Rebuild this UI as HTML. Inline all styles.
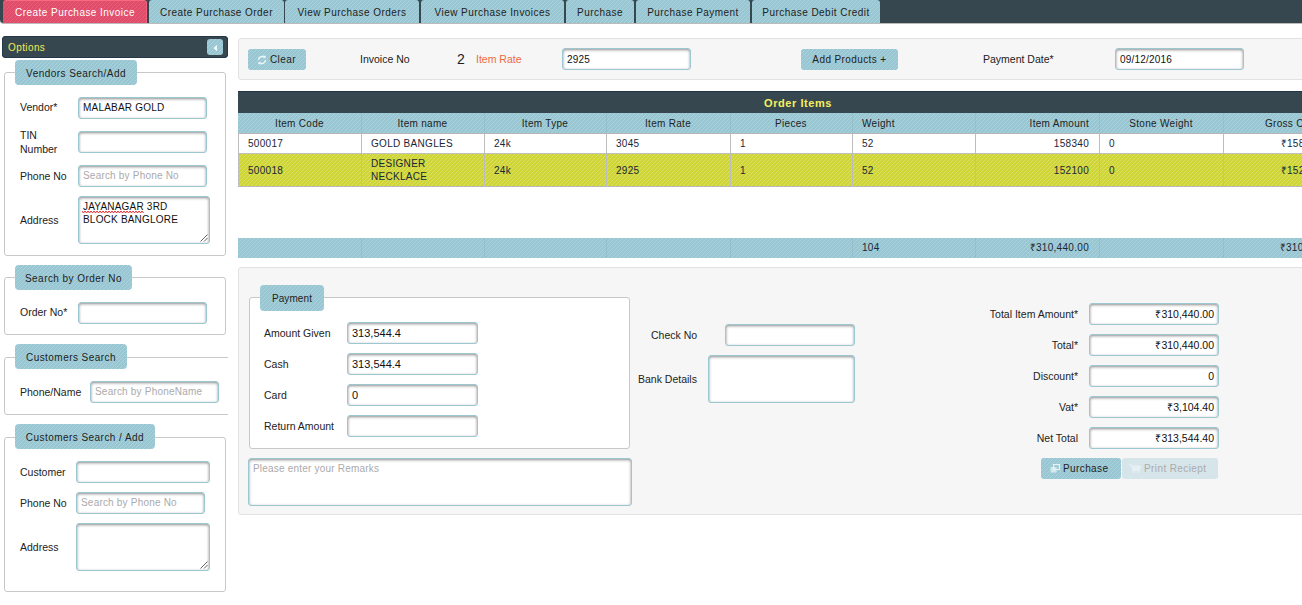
<!DOCTYPE html>
<html><head><meta charset="utf-8">
<style>
*{box-sizing:border-box;margin:0;padding:0}
html,body{width:1302px;height:605px;overflow:hidden;background:#fff;font-family:"Liberation Sans",sans-serif;color:#222;font-size:11px}
.a{position:absolute}
.stripe{background-color:#98c7d3;background-image:linear-gradient(135deg,rgba(255,255,255,.19) 16%,transparent 16%,transparent 50%,rgba(255,255,255,.19) 50%,rgba(255,255,255,.19) 66%,transparent 66%,transparent);background-size:4px 4px}
.nav{left:0;top:0;width:1320px;height:24px;background:#37474f;border-radius:0 0 4px 4px;border-bottom:1px solid #bbb}
.tab{top:0;height:23px;line-height:25px;font-size:10px;letter-spacing:.45px;color:#222;text-align:center;border-radius:3px 3px 0 0}
.tab.red{box-shadow:inset 0 1px 0 #f86a7f,inset -1px 0 0 #f0607a;background-color:#e04c69;background-image:linear-gradient(135deg,rgba(255,255,255,.1) 20%,transparent 20%,transparent 50%,rgba(255,255,255,.1) 50%,rgba(255,255,255,.1) 70%,transparent 70%,transparent);background-size:4px 4px;color:#fff}
.opts{left:2px;top:36px;width:226px;height:22px;background:#37474f;border-radius:4px;box-shadow:inset 0 0 0 1px #24384a;color:#f0ec5a;font-size:10px;letter-spacing:.4px;line-height:24px;padding-left:6px}
.collapse{left:207px;top:39px;width:16px;height:16px;border-radius:3px}
.collapse svg path{}
.fs{border:1px solid #c8c8c8;border-radius:3px}
.lg{height:25px;line-height:27px;border-radius:4px;font-size:10px;letter-spacing:.45px;color:#222;text-align:center}
.lbl{font-size:10.5px;color:#222}
.inp{background:#fff;border:1px solid #9cc6d0;border-radius:3px;box-shadow:inset 0 1px 3px rgba(0,0,0,.45);font-size:10px;letter-spacing:.2px;padding-left:4px;color:#111}
.ph{color:#aaa}
.panel{background:#f6f6f6;border:1px solid #e2e2e2;border-radius:3px}
.btn{border-radius:3px;text-align:center;font-size:10px;color:#222;letter-spacing:.4px}
.th{font-size:10px;color:#222;text-align:center;letter-spacing:.3px}
.yel{background-color:#ced535;background-image:linear-gradient(135deg,rgba(255,255,255,.25) 20%,transparent 20%,transparent 50%,rgba(255,255,255,.25) 50%,rgba(255,255,255,.25) 70%,transparent 70%,transparent);background-size:4px 4px}
.vl{width:1px;background:#bdbdbd}
.tdc{display:flex;align-items:center}
.tdc.rr{justify-content:flex-end}
.tdc span{display:block;line-height:13px}
.lbl2{font-size:10.5px;color:#222}
.r{text-align:right}
.inp2.r{font-size:10.5px}
.inp2{background:#fff;border:1px solid #9cc6d0;border-radius:3px;box-shadow:inset 0 1px 3px rgba(0,0,0,.45);font-size:11px;padding:0 4px;line-height:20px;color:#111}
.td{font-size:10px;letter-spacing:.3px;color:#1a2638;padding-left:9px}
</style></head><body>
<!-- NAV -->
<div class="a nav"></div>
<div class="a tab red" style="left:3px;width:144px">Create Purchase Invoice</div>
<div class="a tab stripe" style="left:149px;width:135px">Create Purchase Order</div>
<div class="a tab stripe" style="left:285px;width:134px">View Purchase Orders</div>
<div class="a tab stripe" style="left:421px;width:143px">View Purchase Invoices</div>
<div class="a tab stripe" style="left:566px;width:68px">Purchase</div>
<div class="a tab stripe" style="left:636px;width:114px">Purchase Payment</div>
<div class="a tab stripe" style="left:752px;width:128px">Purchase Debit Credit</div>

<!-- LEFT SIDEBAR -->
<div class="a" style="left:0;top:0;width:228px;height:605px;overflow:hidden">
<div class="a opts">Options</div>
<div class="a collapse stripe"><svg width="16" height="16" style="position:absolute;left:0;top:0"><path d="M6.5 9 L10 5.8 L10 12.2 Z" fill="#f4fafb"/></svg></div>

<div class="a fs" style="left:4px;top:72px;width:222px;height:184px"></div>
<div class="a lg stripe" style="left:15px;top:60px;width:122px">Vendors Search/Add</div>
<div class="a lbl" style="left:20px;top:101px">Vendor*</div>
<div class="a inp" style="left:78px;top:97px;width:129px;height:22px;line-height:19px">MALABAR GOLD</div>
<div class="a lbl" style="left:20px;top:128px;line-height:14px">TIN<br>Number</div>
<div class="a inp" style="left:78px;top:131px;width:129px;height:22px"></div>
<div class="a lbl" style="left:20px;top:170px">Phone No</div>
<div class="a inp ph" style="left:78px;top:165px;width:129px;height:22px;line-height:20px">Search by Phone No</div>
<div class="a lbl" style="left:20px;top:214px">Address</div>
<div class="a inp" style="left:78px;top:196px;width:132px;height:48px;line-height:13px;padding-top:3px">JAYANAGAR 3RD<br>BLOCK BANGLORE</div>
<svg class="a" style="left:199px;top:233px" width="9" height="9"><path d="M1.5 8.5 L8.5 1.5 M5 8.5 L8.5 5" stroke="#666" stroke-width="1"/></svg>
<svg class="a" style="left:82px;top:210px" width="63" height="4"><path d="M0 1 L1.5 3 L3.0 1 L4.5 3 L6.0 1 L7.5 3 L9.0 1 L10.5 3 L12.0 1 L13.5 3 L15.0 1 L16.5 3 L18.0 1 L19.5 3 L21.0 1 L22.5 3 L24.0 1 L25.5 3 L27.0 1 L28.5 3 L30.0 1 L31.5 3 L33.0 1 L34.5 3 L36.0 1 L37.5 3 L39.0 1 L40.5 3 L42.0 1 L43.5 3 L45.0 1 L46.5 3 L48.0 1 L49.5 3 L51.0 1 L52.5 3 L54.0 1 L55.5 3 L57.0 1 L58.5 3 L60.0 1 L61.5 3" fill="none" stroke="#e43030" stroke-width="1"/></svg>

<div class="a fs" style="left:4px;top:277px;width:222px;height:58px"></div>
<div class="a lg stripe" style="left:15px;top:265px;width:117px">Search by Order No</div>
<div class="a lbl" style="left:20px;top:306px">Order No*</div>
<div class="a inp" style="left:78px;top:302px;width:129px;height:22px"></div>

<div class="a fs" style="left:4px;top:357px;width:240px;height:58px"></div>
<div class="a lg stripe" style="left:15px;top:344px;width:112px">Customers Search</div>
<div class="a lbl" style="left:20px;top:386px">Phone/Name</div>
<div class="a inp ph" style="left:90px;top:381px;width:129px;height:22px;line-height:20px">Search by PhoneName</div>

<div class="a fs" style="left:4px;top:437px;width:222px;height:155px"></div>
<div class="a lg stripe" style="left:15px;top:424px;width:140px">Customers Search / Add</div>
<div class="a lbl" style="left:20px;top:466px">Customer</div>
<div class="a inp" style="left:76px;top:461px;width:134px;height:22px"></div>
<div class="a lbl" style="left:20px;top:497px">Phone No</div>
<div class="a inp ph" style="left:76px;top:492px;width:129px;height:22px;line-height:20px">Search by Phone No</div>
<div class="a lbl" style="left:20px;top:541px">Address</div>
<div class="a inp" style="left:76px;top:523px;width:134px;height:48px"></div>
<svg class="a" style="left:199px;top:560px" width="9" height="9"><path d="M1.5 8.5 L8.5 1.5 M5 8.5 L8.5 5" stroke="#666" stroke-width="1"/></svg>

</div>
<!-- TOP PANEL -->
<div class="a panel" style="left:238px;top:38px;width:1080px;height:42px"></div>
<div class="a btn stripe" style="left:248px;top:49px;width:58px;height:21px;line-height:21px"><svg width="10" height="10" viewBox="0 0 10 10" style="position:absolute;left:9px;top:6px"><path d="M1.5 5 A3.5 3.5 0 0 1 7.5 2.6" fill="none" stroke="#e9f5f7" stroke-width="1.5"/><path d="M8.5 5 A3.5 3.5 0 0 1 2.5 7.4" fill="none" stroke="#e9f5f7" stroke-width="1.5"/><path d="M6 0.5 L9 1 L8 4 Z" fill="#e9f5f7"/><path d="M4 9.5 L1 9 L2 6 Z" fill="#e9f5f7"/></svg><span style="position:absolute;left:22px;top:0">Clear</span></div>
<div class="a lbl" style="left:360px;top:53px">Invoice No</div>
<div class="a lbl" style="left:457px;top:51px;font-size:14px">2</div>
<div class="a lbl" style="left:476px;top:53px;color:#ee6a40;font-size:10.5px">Item Rate</div>
<div class="a inp" style="left:562px;top:48px;width:129px;height:22px;line-height:21px">2925</div>
<div class="a btn stripe" style="left:801px;top:49px;width:97px;height:21px;line-height:21px">Add Products +</div>
<div class="a lbl" style="left:983px;top:53px">Payment Date*</div>
<div class="a inp" style="left:1115px;top:48px;width:129px;height:22px;line-height:21px">09/12/2016</div>

<!-- TABLE -->
<div class="a" style="left:238px;top:91px;width:1120px;height:22px;background:#37474f;border-top:1px solid #22364a;color:#f6ef5e;font-weight:bold;font-size:11px;letter-spacing:.55px;text-align:center;line-height:23px">Order Items</div>
<!-- TABLE BODY -->
<div class="a stripe" style="left:238px;top:113px;width:1120px;height:20px"></div>
<div class="a" style="left:238px;top:133px;width:1120px;height:21px;background:#fff;border-top:1px solid #b8b4b4"></div>
<div class="a yel" style="left:238px;top:153px;width:1120px;height:34px;border-top:1px solid #c0c0c0;border-bottom:1px solid #b8b8b8"></div>
<div class="a stripe" style="left:238px;top:238px;width:1120px;height:20px"></div>
<div class="a vl" style="left:238px;top:133px;height:54px"></div>
<div class="a vl" style="left:361px;top:133px;height:54px"></div>
<div class="a vl" style="left:484px;top:133px;height:54px"></div>
<div class="a vl" style="left:606px;top:133px;height:54px"></div>
<div class="a vl" style="left:730px;top:133px;height:54px"></div>
<div class="a vl" style="left:852px;top:133px;height:54px"></div>
<div class="a vl" style="left:975px;top:133px;height:54px"></div>
<div class="a vl" style="left:1099px;top:133px;height:54px"></div>
<div class="a vl" style="left:1223px;top:133px;height:54px"></div>
<div class="a vl" style="left:1346px;top:133px;height:54px"></div>
<div class="a th" style="left:238px;top:113px;width:123px;height:20px;line-height:22px;text-align:center">Item Code</div>
<div class="a th" style="left:361px;top:113px;width:123px;height:20px;line-height:22px;text-align:center">Item name</div>
<div class="a th" style="left:484px;top:113px;width:122px;height:20px;line-height:22px;text-align:center">Item Type</div>
<div class="a th" style="left:606px;top:113px;width:124px;height:20px;line-height:22px;text-align:center">Item Rate</div>
<div class="a th" style="left:730px;top:113px;width:122px;height:20px;line-height:22px;text-align:center">Pieces</div>
<div class="a th" style="left:852px;top:113px;width:123px;height:20px;line-height:22px;text-align:left;padding-left:10px">Weight</div>
<div class="a th" style="left:975px;top:113px;width:124px;height:20px;line-height:22px;text-align:right;padding-right:10px">Item Amount</div>
<div class="a th" style="left:1099px;top:113px;width:124px;height:20px;line-height:22px;text-align:center">Stone Weight</div>
<div class="a th" style="left:1265px;top:113px;width:123px;height:20px;line-height:22px;text-align:left">Gross Cost</div>
<div class="a td" style="left:238px;top:134px;width:123px;height:19px;line-height:19px;text-align:left;padding-left:10px">500017</div>
<div class="a td" style="left:361px;top:134px;width:123px;height:19px;line-height:19px;text-align:left;padding-left:10px">GOLD BANGLES</div>
<div class="a td" style="left:484px;top:134px;width:122px;height:19px;line-height:19px;text-align:left;padding-left:10px">24k</div>
<div class="a td" style="left:606px;top:134px;width:124px;height:19px;line-height:19px;text-align:left;padding-left:10px">3045</div>
<div class="a td" style="left:730px;top:134px;width:122px;height:19px;line-height:19px;text-align:left;padding-left:10px">1</div>
<div class="a td" style="left:852px;top:134px;width:123px;height:19px;line-height:19px;text-align:left;padding-left:10px">52</div>
<div class="a td" style="left:975px;top:134px;width:124px;height:19px;line-height:19px;text-align:right;padding-right:10px">158340</div>
<div class="a td" style="left:1099px;top:134px;width:124px;height:19px;line-height:19px;text-align:left;padding-left:10px">0</div>
<div class="a td" style="left:1223px;top:134px;width:123px;height:19px;line-height:19px;text-align:right;padding-right:6px">₹158,340.00</div>
<!-- row2 -->
<div class="a" style="left:361px;top:113px;width:1px;height:20px;background:rgba(0,40,60,.06)"></div><div class="a" style="left:361px;top:238px;width:1px;height:20px;background:rgba(0,40,60,.06)"></div><div class="a" style="left:484px;top:113px;width:1px;height:20px;background:rgba(0,40,60,.06)"></div><div class="a" style="left:484px;top:238px;width:1px;height:20px;background:rgba(0,40,60,.06)"></div><div class="a" style="left:606px;top:113px;width:1px;height:20px;background:rgba(0,40,60,.06)"></div><div class="a" style="left:606px;top:238px;width:1px;height:20px;background:rgba(0,40,60,.06)"></div><div class="a" style="left:730px;top:113px;width:1px;height:20px;background:rgba(0,40,60,.06)"></div><div class="a" style="left:730px;top:238px;width:1px;height:20px;background:rgba(0,40,60,.06)"></div><div class="a" style="left:852px;top:113px;width:1px;height:20px;background:rgba(0,40,60,.06)"></div><div class="a" style="left:852px;top:238px;width:1px;height:20px;background:rgba(0,40,60,.06)"></div><div class="a" style="left:975px;top:113px;width:1px;height:20px;background:rgba(0,40,60,.06)"></div><div class="a" style="left:975px;top:238px;width:1px;height:20px;background:rgba(0,40,60,.06)"></div><div class="a" style="left:1099px;top:113px;width:1px;height:20px;background:rgba(0,40,60,.06)"></div><div class="a" style="left:1099px;top:238px;width:1px;height:20px;background:rgba(0,40,60,.06)"></div><div class="a" style="left:1223px;top:113px;width:1px;height:20px;background:rgba(0,40,60,.06)"></div><div class="a" style="left:1223px;top:238px;width:1px;height:20px;background:rgba(0,40,60,.06)"></div>
<div class="a td tdc" style="left:238px;top:154px;width:123px;height:32px;text-align:left;padding-left:10px"><span>500018</span></div>
<div class="a td tdc" style="left:361px;top:154px;width:123px;height:32px;text-align:left;padding-left:10px"><span>DESIGNER<br>NECKLACE</span></div>
<div class="a td tdc" style="left:484px;top:154px;width:122px;height:32px;text-align:left;padding-left:10px"><span>24k</span></div>
<div class="a td tdc" style="left:606px;top:154px;width:124px;height:32px;text-align:left;padding-left:10px"><span>2925</span></div>
<div class="a td tdc" style="left:730px;top:154px;width:122px;height:32px;text-align:left;padding-left:10px"><span>1</span></div>
<div class="a td tdc" style="left:852px;top:154px;width:123px;height:32px;text-align:left;padding-left:10px"><span>52</span></div>
<div class="a td tdc rr" style="left:975px;top:154px;width:124px;height:32px;text-align:right;padding-right:10px"><span>152100</span></div>
<div class="a td tdc" style="left:1099px;top:154px;width:124px;height:32px;text-align:left;padding-left:10px"><span>0</span></div>
<div class="a td tdc rr" style="left:1223px;top:154px;width:123px;height:32px;text-align:right;padding-right:6px"><span>₹152,100.00</span></div>
<div class="a td" style="left:852px;top:238px;width:123px;height:20px;line-height:20px;text-align:left;padding-left:10px">104</div>
<div class="a td" style="left:975px;top:238px;width:124px;height:20px;line-height:20px;text-align:right;padding-right:10px">₹310,440.00</div>
<div class="a td" style="left:1223px;top:238px;width:123px;height:20px;line-height:20px;text-align:right;padding-right:7px">₹310,440.00</div>
<!-- BOTTOM PANEL -->
<div class="a panel" style="left:238px;top:267px;width:1080px;height:248px"></div>
<div class="a fs" style="left:249px;top:297px;width:381px;height:152px;background:#fff"></div>
<div class="a lg stripe" style="left:260px;top:285px;width:64px;height:26px;line-height:28px;letter-spacing:.1px">Payment</div>
<div class="a lbl2" style="left:264px;top:327px">Amount Given</div>
<div class="a inp2" style="left:347px;top:322px;width:131px;height:22px">313,544.4</div>
<div class="a lbl2" style="left:264px;top:358px">Cash</div>
<div class="a inp2" style="left:347px;top:353px;width:131px;height:22px">313,544.4</div>
<div class="a lbl2" style="left:264px;top:389px">Card</div>
<div class="a inp2" style="left:347px;top:384px;width:131px;height:22px">0</div>
<div class="a lbl2" style="left:264px;top:420px">Return Amount</div>
<div class="a inp2" style="left:347px;top:415px;width:131px;height:22px"></div>
<div class="a inp ph" style="left:248px;top:458px;width:384px;height:48px;padding-top:4px;line-height:12px">Please enter your Remarks</div>

<div class="a lbl2" style="left:651px;top:329px">Check No</div>
<div class="a inp" style="left:725px;top:324px;width:130px;height:22px"></div>
<div class="a lbl2" style="left:638px;top:373px">Bank Details</div>
<div class="a inp" style="left:708px;top:355px;width:147px;height:48px"></div>

<div class="a lbl2 r" style="left:900px;top:308px;width:178px">Total Item Amount*</div>
<div class="a inp2 r" style="left:1089px;top:303px;width:130px;height:22px">&#8377;310,440.00</div>
<div class="a lbl2 r" style="left:900px;top:339px;width:178px">Total*</div>
<div class="a inp2 r" style="left:1089px;top:334px;width:130px;height:22px">&#8377;310,440.00</div>
<div class="a lbl2 r" style="left:900px;top:370px;width:178px">Discount*</div>
<div class="a inp2 r" style="left:1089px;top:365px;width:130px;height:22px">0</div>
<div class="a lbl2 r" style="left:900px;top:401px;width:178px">Vat*</div>
<div class="a inp2 r" style="left:1089px;top:396px;width:130px;height:22px">&#8377;3,104.40</div>
<div class="a lbl2 r" style="left:900px;top:432px;width:178px">Net Total</div>
<div class="a inp2 r" style="left:1089px;top:427px;width:130px;height:22px">&#8377;313,544.40</div>
<div class="a btn stripe" style="left:1041px;top:458px;width:80px;height:21px;line-height:21px"><svg width="11" height="9" viewBox="0 0 11 9" style="position:absolute;left:9px;top:6px"><rect x="3.5" y="0.5" width="6" height="5" fill="none" stroke="#e6f2f5" stroke-width="1.2"/><rect x="0.5" y="3" width="6" height="5.5" fill="#e6f2f5" opacity=".75"/></svg><span style="position:absolute;left:22px;top:0">Purchase</span></div>
<div class="a btn" style="left:1122px;top:458px;width:96px;height:21px;line-height:21px;background:#d5e5ea;color:#aeaaaa"><svg width="12" height="9" viewBox="0 0 12 9" style="position:absolute;left:7px;top:6px"><path d="M0 1 L2.5 1 L4 6.5 L10.5 6.5 L11.5 2 L3 2" fill="#e6f0f3" stroke="#e6f0f3" stroke-width="1.2"/><circle cx="4.5" cy="8" r="1" fill="#e6f0f3"/><circle cx="9.5" cy="8" r="1" fill="#e6f0f3"/></svg><span style="position:absolute;left:22px;top:0">Print Reciept</span></div>

</body></html>
